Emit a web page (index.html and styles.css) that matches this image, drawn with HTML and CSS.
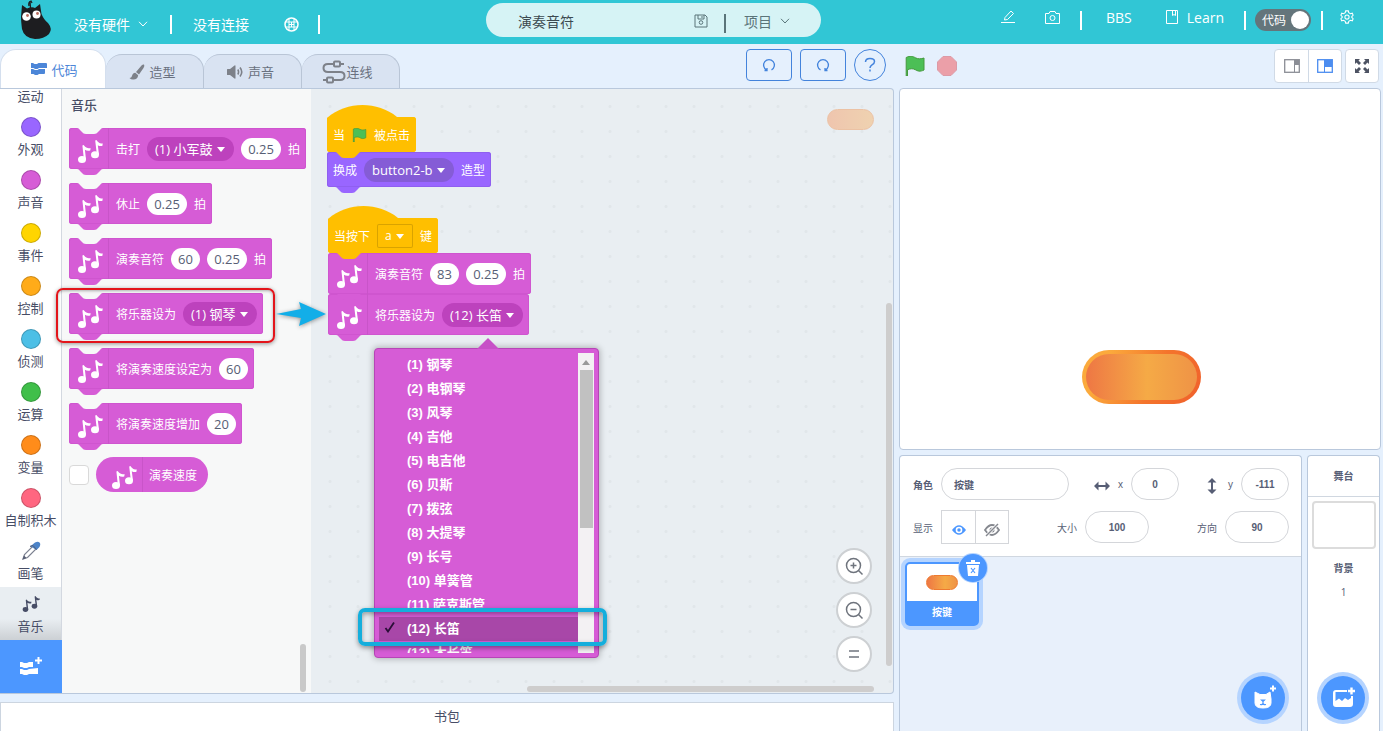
FILE: index.html
```html
<!DOCTYPE html>
<html lang="zh-CN">
<head>
<meta charset="utf-8">
<meta name="viewport" content="width=device-width, initial-scale=1">
<title>演奏音符</title>
<link rel="stylesheet" href="styles.css">
</head>
<body>
<svg class="defs" aria-hidden="true">
  <symbol id="notes" viewBox="0 0 26 25"><g fill="currentColor"><ellipse cx="5" cy="20.500" rx="4" ry="3.500"/><ellipse cx="18" cy="15.800" rx="4" ry="3.500"/><path d="M6.900 20.500L5.400 6.600L6.600 6C8.500 9 11 9.300 13.700 9.300L13.200 11.600C11 12 9.200 11.800 7.900 10.800L9 20.500Z"/><path d="M19.900 15.800L18.200 1.600L19.400 1C21.200 4 23.500 4.600 25.800 4.600L25.300 6.900C23.500 7.200 21.800 7 20.800 6.200L22 15.800Z"/></g></symbol>
  <symbol id="flag" viewBox="0 0 20 20"><path d="M1.200 1.500C5 -.5 8 .3 10.500 1.800S16 3 19 2V14C15 16 12.500 15 10.300 13.700S5.500 12.500 2.500 13.700V20H1.200Z" fill="#4cbf56" stroke="#45993d" stroke-width="1"/></symbol>
  <symbol id="chev" viewBox="0 0 10 6"><path d="M1 .8L5 5L9 .8" fill="none" stroke="currentColor"/></symbol>
  <symbol id="codeblocks" viewBox="0 0 16 12"><path fill="currentColor" d="M0 0H2L3.500 1H6L7.500 0H15Q16 0 16 1V5H8L6.500 6H4L2.500 5H0ZM0 6H2L4 7H6.500L8 6H14V10Q14 11 13 11H8L6.500 12H4L2.500 11H0Z"/></symbol>
</svg>

<header class="topbar">
  <div class="top-left">
    <svg class="logo" viewBox="0 0 34 40"><path d="M10 6Q9 2 12 1L13 3M11.500 8L11 1" stroke="#1d2024" stroke-width="1.300" fill="none"/><path fill="#1d1d20" d="M3 5L8 8.500Q13 6.500 16 8L21 4L22.500 14Q25 20 29 23Q34 29 30 34Q25 39 16 39Q5 38 3 29Q2 21 2 17Z"/><circle cx="7.500" cy="16.500" r="4.300" fill="#fff"/><circle cx="17.500" cy="14.500" r="4" fill="#fff"/><circle cx="8.500" cy="15.500" r="1.400" fill="#b86c5e"/><circle cx="18.500" cy="13.500" r="1.400" fill="#b86c5e"/></svg>
    <button class="plain">没有硬件 <svg class="chev"><use href="#chev"/></svg></button>
    <i class="bar"></i>
    <button class="plain">没有连接</button>
    <button class="plain globe" aria-label="语言"><svg width="15" height="15" viewBox="0 0 15 15" fill="none" stroke="currentColor"><circle cx="7.500" cy="7.500" r="6.500" stroke-width="1.500"/><path d="M5 2V13M10 2V13M2 5H13M2 10H13M7.500 5V10M5 7.500H10"/></svg></button>
    <i class="bar"></i>
  </div>
  <div class="project">
    <input class="project-name" aria-label="项目名称" value="演奏音符">
    <button class="plain" aria-label="保存"><svg width="14" height="14" viewBox="0 0 14 14" fill="none" stroke="currentColor"><path d="M1 1H11L13 3V13H1ZM4 1V5H10V1M8 2V4"/><circle cx="7" cy="8.500" r="1.800"/></svg></button>
    <i class="bar dark"></i>
    <button class="plain">项目 <svg class="chev"><use href="#chev"/></svg></button>
  </div>
  <div class="top-right">
    <button class="plain" aria-label="编辑"><svg width="14" height="14" viewBox="0 0 14 14" fill="none" stroke="currentColor"><path d="M0 12.500H14M4 7.500L10 1L12.500 3.500L6.500 9.500L3.500 10Z"/></svg></button>
    <button class="plain camera" aria-label="截图"><svg width="15" height="13" viewBox="0 0 15 13" fill="none" stroke="currentColor"><path d="M.5 2.500H4L5 .5H10L11 2.500H14.500V12.500H.5Z"/><circle cx="7.500" cy="7" r="2.500"/></svg></button>
    <i class="bar"></i>
    <a class="toplink bbs" href="#bbs">BBS</a>
    <a class="toplink" href="#learn"><svg width="12" height="14" viewBox="0 0 12 14" fill="none" stroke="currentColor"><path d="M.5.5H11.500V13.500H.5ZM6.500.5V5.500L8 4.500L9.500 5.500V.5"/></svg>Learn</a>
    <i class="bar"></i>
    <label class="switch"><input type="checkbox" checked><span>代码</span><b></b></label>
    <i class="bar"></i>
    <button class="plain gear" aria-label="设置"><svg width="14" height="14" viewBox="0 0 16 16" fill="none" stroke="currentColor" stroke-width="1.200"><path d="M6.500 1H9.500L10 3L12 4.200L14 3.600L15 6L13.500 7.500V8.500L15 10L14 12.400L12 11.800L10 13L9.500 15H6.500L6 13L4 11.800L2 12.400L1 10L2.500 8.500V7.500L1 6L2 3.600L4 4.200L6 3Z"/><circle cx="8" cy="8" r="2.400"/></svg></button>
  </div>
</header>

<main class="app">
  <section class="left">
    <div class="tools">
      <nav class="tabs">
        <button class="tab active"><svg width="16" height="12"><use href="#codeblocks"/></svg>代码</button>
        <button class="tab"><svg width="16" height="16" viewBox="0 0 16 16" fill="#7d8189"><path d="M15 .5Q16 1.500 14.500 4L10 10.500L7 8L12.500 1.500Q14 0 15 .5ZM6.300 8.700L9.200 11.200Q8.500 15.500 4.500 15.500Q2 15.700.5 14Q2.500 14 3 12Q3.500 9 6.300 8.700Z"/></svg>造型</button>
        <button class="tab"><svg width="17" height="14" viewBox="0 0 17 14"><path fill="#7d8189" d="M0 4.500Q0 4 .6 4H3L7.500.5Q8.500 0 8.500 1V13Q8.500 14 7.500 13.500L3 10H.6Q0 10 0 9.500Z"/><path d="M10.800 4.500Q12.300 7 10.800 9.500M13 2.500Q16.500 7 13 11.500" stroke="#7d8189" stroke-width="1.600" fill="none"/></svg>声音</button>
        <button class="tab wire"><svg width="24" height="24" viewBox="0 0 24 24" fill="none" stroke="#7d8189" stroke-width="2"><path d="M12 4H6Q1.500 4 1.500 8T6 12H18Q22.500 12 22.500 16T18 20H11M18 4H22M1 20H5"/><rect x="12" y="1.500" width="6" height="5" rx="1"/><rect x="5" y="17.500" width="6" height="5" rx="1"/></svg>连线</button>
      </nav>
      <div class="tool-buttons">
        <button class="tool" aria-label="撤销"><svg width="14" height="14" viewBox="0 0 14 14"><path d="M4.500 11.800A5.400 5.400 0 1 1 9.500 11.800M2.500 12.500H5V10" fill="none" stroke="currentColor" stroke-width="1.300"/></svg></button>
        <button class="tool" aria-label="重做"><svg width="14" height="14" viewBox="0 0 14 14"><path d="M4.500 11.800A5.400 5.400 0 1 1 9.500 11.800M11.500 12.500H9V10" fill="none" stroke="currentColor" stroke-width="1.300"/></svg></button>
        <button class="tool round" aria-label="帮助"><svg width="12" height="16" viewBox="0 0 12 16"><path d="M1.500 5Q1.500 1.500 6 1.500T10.500 4.500Q10.500 6.500 8 7.800Q6 9 6 11M6 12.500V14.500" fill="none" stroke="currentColor" stroke-width="1.500"/></svg></button>
      </div>
    </div>

    <div class="editor">
      <div class="cats">
        <div class="cat-list">
          <button class="cat"><i class="dot motion"></i>运动</button>
          <button class="cat"><i class="dot looks"></i>外观</button>
          <button class="cat"><i class="dot sound"></i>声音</button>
          <button class="cat"><i class="dot events"></i>事件</button>
          <button class="cat"><i class="dot control"></i>控制</button>
          <button class="cat"><i class="dot sensing"></i>侦测</button>
          <button class="cat"><i class="dot operators"></i>运算</button>
          <button class="cat"><i class="dot variables"></i>变量</button>
          <button class="cat"><i class="dot myblocks"></i>自制积木</button>
          <button class="cat"><svg width="20" height="20" viewBox="0 0 20 20"><path d="M2 18L3.500 13.500L12 5L15 8L6.500 16.500Z" fill="#fff" stroke="#7c8190" stroke-width="1.200"/><path d="M1.500 18.500L3 14.500L5.500 17Z" fill="#575e75"/><path d="M9 5L11 4L14 1.500Q17 0 18.500 1.500T18.500 6L15.500 9Z" fill="#4c83c8"/><path d="M9 5.500L12 4.500L15.500 8.500" stroke="#575e75" fill="none"/></svg>画笔</button>
          <button class="cat selected"><svg width="18" height="20"><use href="#notes"/></svg>音乐</button>
        </div>
        <button class="add-ext" aria-label="添加扩展"><svg width="24" height="20" viewBox="0 0 24 20"><path fill="#fff" d="M1 5H3L5 6H8L10 5H14V10H10L8 11H5L3 10H1ZM1 12H3L5 13H8L10 12L19 11V17H10L8 18H5L3 17H1Z"/><path d="M19.500 0V7M16 3.500H23" stroke="#fff" stroke-width="2"/></svg></button>
      </div>

      <div class="palette">
        <h2>音乐</h2>
        <div class="block music"><span class="ico"><svg><use href="#notes"/></svg></span>击打<span class="drop"><select aria-label="鼓"><option>(1) 小军鼓</option></select></span><input class="val wide" aria-label="拍数" value="0.25">拍</div>
        <div class="block music"><span class="ico"><svg><use href="#notes"/></svg></span>休止<input class="val wide" aria-label="拍数" value="0.25">拍</div>
        <div class="block music"><span class="ico"><svg><use href="#notes"/></svg></span>演奏音符<input class="val" aria-label="音符" value="60"><input class="val wide" aria-label="拍数" value="0.25">拍</div>
        <div class="block music"><span class="ico"><svg><use href="#notes"/></svg></span>将乐器设为<span class="drop"><select aria-label="乐器"><option>(1) 钢琴</option></select></span></div>
        <div class="block music"><span class="ico"><svg><use href="#notes"/></svg></span>将演奏速度设定为<input class="val" aria-label="速度" value="60"></div>
        <div class="block music"><span class="ico"><svg><use href="#notes"/></svg></span>将演奏速度增加<input class="val" aria-label="速度增量" value="20"></div>
        <div class="reporter-row"><input type="checkbox" id="tempo" class="check"><label for="tempo" class="reporter"><span class="ico"><svg><use href="#notes"/></svg></span>演奏速度</label></div>
        <i class="scroll-thumb"></i>
      </div>

      <div class="canvas">
        <div class="stack first">
          <div class="block hat">当<svg class="flag"><use href="#flag"/></svg>被点击</div>
          <div class="block looksblock">换成<span class="drop"><select aria-label="造型"><option>button2-b</option></select></span>造型</div>
        </div>
        <div class="stack second">
          <div class="block hat key">当按下<span class="drop square"><select aria-label="按键"><option>a</option></select></span>键</div>
          <div class="block music"><span class="ico"><svg><use href="#notes"/></svg></span>演奏音符<input class="val" aria-label="音符" value="83"><input class="val wide" aria-label="拍数" value="0.25">拍</div>
          <div class="block music"><span class="ico"><svg><use href="#notes"/></svg></span>将乐器设为<span class="drop"><select aria-label="乐器"><option>(12) 长笛</option></select></span></div>
        </div>
        <i class="ghost"></i>
        <div class="menu">
          <ul>
            <li>(1) 钢琴</li><li>(2) 电钢琴</li><li>(3) 风琴</li><li>(4) 吉他</li><li>(5) 电吉他</li><li>(6) 贝斯</li><li>(7) 拨弦</li><li>(8) 大提琴</li><li>(9) 长号</li><li>(10) 单簧管</li><li>(11) 萨克斯管</li><li class="chosen"><svg width="12" height="12" viewBox="0 0 12 12"><path d="M1.500 7L4 10.500L10 1.500" fill="none" stroke="#2b0e38" stroke-width="1.800"/></svg>(12) 长笛</li><li>(13) 木长笛</li>
          </ul>
          <div class="menu-scroll"><svg width="8" height="5" viewBox="0 0 8 5"><path d="M0 5L4 0L8 5Z" fill="#999"/></svg><i></i></div>
        </div>
        <div class="zooms">
          <button aria-label="放大"><svg viewBox="0 0 20 20"><circle cx="9.500" cy="9.500" r="7"/><path d="M14.500 14.500L18.500 18.500M6.500 9.500H12.500M9.500 6.500V12.500"/></svg></button>
          <button aria-label="缩小"><svg viewBox="0 0 20 20"><circle cx="9.500" cy="9.500" r="7"/><path d="M14.500 14.500L18.500 18.500M6.500 9.500H12.500"/></svg></button>
          <button aria-label="还原"><svg viewBox="0 0 20 20"><path d="M5 7H15M5 13H15"/></svg></button>
        </div>
        <i class="vscroll"></i><i class="hscroll"></i>
      </div>

      <i class="mark-red"></i>
      <svg class="mark-arrow" viewBox="0 0 52 28"><path d="M1 14L26 9L24 2L51 14L24 26L26 18Z" fill="#12aee8"/></svg>
      <i class="mark-blue"></i>
    </div>

    <button class="backpack">书包</button>
  </section>

  <section class="right">
    <div class="stage-bar">
      <button class="plain" aria-label="开始"><svg width="20" height="20"><use href="#flag"/></svg></button>
      <button class="plain" aria-label="停止"><svg width="20" height="20" viewBox="0 0 20 20"><path d="M6 .5H14L19.500 6V14L14 19.500H6L.5 14V6Z" fill="#eb9fa8" stroke="#dc9aa6"/></svg></button>
      <div class="sizes">
        <button aria-label="小舞台"><svg width="16" height="14" viewBox="0 0 16 14"><rect x=".7" y=".7" width="14.600" height="12.600" fill="none" stroke="#8b8e96" stroke-width="1.300"/><path d="M10.500 1V13" stroke="#8b8e96"/><path d="M11 1H15V6H11Z" fill="#8b8e96"/></svg></button>
        <button aria-label="大舞台"><svg width="16" height="14" viewBox="0 0 16 14"><rect x=".7" y=".7" width="14.600" height="12.600" fill="none" stroke="#4c8df0" stroke-width="1.300"/><path d="M7.500 1V13" stroke="#4c8df0"/><path d="M8 1H15V8H8Z" fill="#4c8df0"/></svg></button>
      </div>
      <div class="sizes full"><button aria-label="全屏"><svg width="16" height="16" viewBox="0 0 16 16"><path d="M1 1H6L4.500 2.500L7 5L5 7L2.500 4.500L1 6ZM15 1V6L13.500 4.500L11 7L9 5L11.500 2.500L10 1ZM1 15V10L2.500 11.500L5 9L7 11L4.500 13.500L6 15ZM15 15H10L11.500 13.500L9 11L11 9L13.500 11.500L15 10Z" fill="#4d5363"/></svg></button></div>
    </div>
    <div class="stage"><i class="sprite"></i></div>
    <div class="panes">
      <div class="sprites">
        <div class="info">
          <div class="row">
            <div class="field"><label class="strong" for="sname">角色</label><input id="sname" class="pill name" value="按键"></div>
            <div class="field arrows"><svg width="16" height="16" viewBox="0 0 16 16"><path d="M0 8L4.500 3.500V7H11.500V3.500L16 8L11.500 12.500V9H4.500V12.500Z" fill="#575e75"/></svg><label for="sx">x</label><input id="sx" class="pill small" value="0"></div>
            <div class="field arrows"><svg width="16" height="16" viewBox="0 0 16 16"><path d="M8 0L12.500 4.500H9V11.500H12.500L8 16L3.500 11.500H7V4.500H3.500Z" fill="#575e75"/></svg><label for="sy">y</label><input id="sy" class="pill small" value="-111"></div>
          </div>
          <div class="row">
            <div class="field"><span>显示</span><div class="eyes"><button aria-label="显示"><svg width="14" height="12" viewBox="0 0 16 12"><path d="M0 6Q8 -5 16 6Q8 17 0 6Z" fill="#4c97ff"/><circle cx="8" cy="6" r="3.800" fill="#fff"/><circle cx="8" cy="6" r="2" fill="#4c97ff"/></svg></button><button aria-label="隐藏"><svg width="16" height="14" viewBox="0 0 16 14"><path d="M1 7Q8 -3 15 7Q8 17 1 7Z" fill="none" stroke="#85888f" stroke-width="1.800"/><circle cx="8" cy="7" r="2.500" fill="#85888f"/><path d="M2 13L14 1" stroke="#fff" stroke-width="3"/><path d="M2 13L14 1" stroke="#85888f" stroke-width="1.400"/></svg></button></div></div>
            <div class="field"><label for="ssize">大小</label><input id="ssize" class="pill" value="100"></div>
            <div class="field"><label for="sdir">方向</label><input id="sdir" class="pill" value="90"></div>
          </div>
        </div>
        <div class="sprite-list">
          <div class="tile"><div class="thumb"><i></i></div><span>按键</span>
            <button class="trash" aria-label="删除"><svg width="14" height="16" viewBox="0 0 14 16"><path d="M5 0H9V2H14V4H0V2H5ZM1 5H13L12 16H2Z" fill="#fff"/><path d="M5 8L9 13M9 8L5 13" stroke="#4c97ff" stroke-width="1.200"/></svg></button>
          </div>
          <button class="fab" aria-label="选择角色"><svg width="26" height="26" viewBox="0 0 26 26"><path d="M5 7L10 9.500H16L20 7L21 14V18Q21 23 13 23T5 18Z" fill="#fff" stroke="#fff" stroke-linejoin="round"/><path d="M11.500 15H14.500L13 16.500ZM13 16.500V18.500M10 19.500Q13 20 13 18Q13 20 16 19.500" fill="#4c97ff" stroke="#4c97ff" stroke-width="1.200"/><path d="M23 .5V6.500M20 3.500H26" stroke="#fff" stroke-width="2"/></svg></button>
        </div>
      </div>
      <div class="backdrops">
        <h3>舞台</h3>
        <i class="bd-thumb"></i>
        <b>背景</b>
        <span>1</span>
        <button class="fab" aria-label="选择背景"><svg width="26" height="26" viewBox="0 0 26 26"><path fill="#fff" fill-rule="evenodd" d="M6 5H17V7H5.500V16L9 13.500L12 16L15 13L18 15L21 13V11H23V19Q23 22 20 22H6Q3 22 3 19V8Q3 5 6 5Z"/><path d="M21.500 2.500V9.500M18 6H25" stroke="#fff" stroke-width="2.400"/></svg></button>
      </div>
    </div>
  </section>
</main>
</body>
</html>
```
FILE: styles.css
```css
* { box-sizing: border-box; }
html, body { height: 100%; margin: 0; }
body {
  display: flex; flex-direction: column; overflow: hidden;
  font-family: "Open Sans", "Noto Sans CJK SC", sans-serif;
  font-size: 13px; color: #575e75; background: #e5f0fd;
}
button, input, select { font: inherit; color: inherit; }
button { background: none; border: 0; padding: 0; cursor: pointer; }
svg { display: block; flex: none; }
.defs { position: absolute; width: 0; height: 0; }
.plain { display: flex; align-items: center; gap: 8px; }

/* Top bar */
.topbar {
  display: grid; grid-template-columns: 486fr 335px 562fr; align-items: center;
  height: 44px; flex: none; background: #31c6d5; color: #fff; font-size: 14px;
}
.top-left { display: flex; align-items: center; height: 44px; padding: 4px 0 0 19px; }
.logo { width: 34px; height: 40px; margin-top: -8px; margin-right: 21px; }
.chev { width: 10px; height: 6px; }
.bar { width: 2px; height: 19px; background: currentColor; }
.top-left .bar { margin-left: 22px; }
.top-left .bar + .plain { margin-left: 21px; }
.globe { margin-left: 35px; }
.top-left .globe + .bar { margin-left: 19px; }
.project {
  display: flex; align-items: center; height: 34px; margin-bottom: 4px;
  padding: 2px 31px 0 32px; border-radius: 17px; background: #d6f3f5; color: #5a7479;
}
.project-name { flex: 1; min-width: 0; border: 0; padding: 0; background: none; outline: 0; color: #3c4a50; }
.bar.dark { margin: 4px 18px 0 16px; }
.top-right { display: flex; align-items: center; justify-content: flex-end; height: 44px; padding: 0 29px 10px 0; }
.top-right .bar { margin-top: 6px; }
.camera { margin: 0 20px 0 30px; }
.toplink { display: flex; align-items: center; gap: 9px; color: #fff; text-decoration: none; }
.bbs { margin: 0 34px 0 24px; }
.toplink + .bar { margin-left: 20px; margin-right: 9px; }
.switch {
  display: flex; align-items: center; justify-content: space-between; position: relative;
  width: 56px; height: 22px; margin-top: 6px; padding: 0 2px 0 7px; border-radius: 11px;
  background: #64757b; font-size: 12px;
}
.switch input { position: absolute; opacity: 0; }
.switch b { width: 18px; height: 18px; border-radius: 9px; background: #fff; }
.switch + .bar { margin-left: 10px; }
.gear { margin-left: 17px; }

/* Columns */
.app { display: flex; flex: 1; min-height: 0; }
.left { display: flex; flex-direction: column; flex: 1; min-width: 0; }
.right { display: flex; flex-direction: column; width: 484px; margin-left: 5px; padding-right: 2px; }

/* Tabs and tools */
.tools { display: flex; justify-content: space-between; height: 44px; }
.tabs { display: flex; align-items: flex-end; }
.tab {
  display: flex; align-items: center; justify-content: center; gap: 4px;
  width: 98px; height: 34px; padding-right: 4px; color: #6a7180; background: #d9e3f2;
  border: 1px solid #b9c5d6; border-bottom: 0; border-left: 0; border-radius: 16px 16px 0 0;
}
.tab.active { width: 106px; height: 39px; padding: 0 0 0 3px; background: #fff; color: #4c86d8; border: 1px solid #d4dfee; border-bottom: 0; }
.tab.wire { gap: 0; padding-right: 6px; }
.tool-buttons { display: flex; gap: 8px; padding: 5px 8px 0 0; }
.tool {
  display: flex; align-items: center; justify-content: center; width: 46px; height: 32px;
  border: 1px solid #4383dc; border-radius: 4px; color: #4383dc;
}
.tool.round { width: 32px; border-radius: 16px; }

/* Editor */
.editor {
  position: relative; display: flex; flex: 1; min-height: 0;
  border: 1px solid #b9c8dc; border-left: 0; border-radius: 0 4px 4px 0; background: #e9eef2;
}
.cats { display: flex; flex-direction: column; width: 62px; background: #fff; border-right: 1px solid #d3d8e0; }
.cat-list { display: flex; flex-direction: column; justify-content: flex-end; flex: 1; min-height: 0; overflow: hidden; }
.cat {
  display: flex; flex-direction: column; align-items: center; gap: 4px; flex: none;
  height: 53px; padding-top: 7px; line-height: 16px; white-space: nowrap; color: #474d66;
}
.cat.selected { background: linear-gradient(#e9eef2 60%, #ccd0d4); color: #474d66; }
.dot { width: 20px; height: 20px; border-radius: 10px; border: 1px solid rgba(0, 0, 0, .2); }
.motion { background: #4c97ff; }
.looks { background: #9966ff; }
.sound { background: #d65cd6; }
.events { background: #ffd500; }
.control { background: #ffab19; }
.sensing { background: #4cbfe6; }
.operators { background: #40bf4a; }
.variables { background: #ff8c1a; }
.myblocks { background: #ff6680; }
.add-ext { display: flex; align-items: center; justify-content: center; width: 62px; height: 53px; background: #4c97ff; }

.palette {
  --back: #f7f8f8;
  position: relative; display: flex; flex-direction: column; align-items: flex-start; gap: 14px;
  width: 249px; padding: 8px 0 0 7px; background: #f7f8f8;
}
.palette h2 { margin: 0 0 1px 2px; font-size: 13px; line-height: 16px; font-weight: 500; color: #474d66; }
.scroll-thumb { position: absolute; right: 5px; bottom: 1px; width: 6px; height: 48px; border-radius: 3px; background: #c9c9c9; }

/* Blocks */
.block {
  position: relative; display: flex; align-items: center; gap: 7px; height: 41px; padding: 0 6px;
  border-radius: 3px; color: #fff; font-size: 12px; white-space: nowrap;
  background: var(--fill); box-shadow: inset 0 0 0 1px var(--edge);
}
.block::before, .block::after {
  content: ""; position: absolute; left: 8px; width: 26px; height: 6px;
  clip-path: path("M0 0C2 0 2 1 3 2L5 4C6 5 7 6 9 6H17C19 6 20 5 21 4L23 2C24 1 24 0 26 0Z");
}
.block::before { top: 0; background: var(--back); }
.block::after { top: 100%; background: var(--fill); z-index: 1; }
.stack .block + .block::before { display: none; }
.music { --fill: #d65cd6; --edge: #cf55cf; }
.looksblock { --fill: #9966ff; --edge: #8f5ff0; height: 35px; padding: 0 6px; }
.hat { --fill: #ffbf00; --edge: #ffbf00; height: 35px; padding: 0 6px; }
.hat::before {
  left: 0; top: -12px; width: 70px; height: 15px; background: #ffbf00;
  clip-path: path("M0 15V13C20 -4 50 -4 70 12V15Z");
}
.ico {
  display: flex; align-items: center; align-self: stretch; width: 34px; padding-top: 6px;
  border-right: 1px solid #c954c9;
}
.ico svg { width: 26px; height: 25px; margin-left: 2px; }
.val {
  width: 29px; height: 22px; padding: 0; border: 0; border-radius: 11px;
  text-align: center; font-size: 13px; color: #575e75; background: #fff;
}
.val.wide { width: 40px; }
.drop { position: relative; display: flex; border-radius: 12px; background: #bd42bd; }
.drop select {
  appearance: none; height: 24px; padding: 0 21px 0 8px; border: 0; border-radius: 12px;
  background: none; font-size: 13px; color: #fff; outline: 0;
}
.drop::after {
  content: ""; position: absolute; right: 9px; top: 10px;
  border: 4px solid transparent; border-top: 5px solid #fff; border-bottom: 0; pointer-events: none;
}
.looksblock .drop { background: #855cd6; }
.drop.square { border-radius: 2px; background: none; box-shadow: inset 0 0 0 1px #d9a300; }
.drop.square select { font-size: 12px; }
.flag { width: 15px; height: 14px; }
.reporter-row { display: flex; align-items: center; gap: 7px; margin-top: -1px; }
.check { appearance: none; width: 20px; height: 20px; margin: 0; border: 1px solid #d9d9d9; border-radius: 4px; background: #fff; }
.reporter {
  display: flex; align-items: center; gap: 6px; height: 35px; padding: 0 11px 0 13px;
  border-radius: 18px; background: #d65cd6; color: #fff; font-size: 12px;
}

/* Script canvas */
.canvas {
  --back: #e9eef2;
  position: relative; flex: 1; min-width: 0;
  background: radial-gradient(circle, #e1e6ea 1px, transparent 2px) 5px 5px / 28px 25px;
}
.stack { position: absolute; display: flex; flex-direction: column; align-items: flex-start; }
.first { left: 16px; top: 28px; }
.second { left: 17px; top: 129px; }
.ghost {
  position: absolute; right: 19px; top: 20px; width: 47px; height: 21px; border-radius: 11px;
  border: 1px solid #ecc2a4; background: linear-gradient(90deg, #efc5ae, #efd2b0);
}
.menu {
  position: absolute; left: 63px; top: 259px; display: flex; width: 225px; height: 310px; padding: 4px;
  border: 1px solid #b745b7; border-radius: 4px; background: #d65cd6; color: #fff;
  box-shadow: 0 0 6px 1px rgba(0, 0, 0, .25);
}
.menu::before {
  content: ""; position: absolute; left: 102px; top: -11px; width: 22px; height: 11px;
  background: #c750c7; clip-path: polygon(50% 0, 100% 100%, 0 100%);
}
.menu ul {
  flex: 1; height: 300px; margin: 0; padding: 0; list-style: none; overflow: hidden;
  font-family: "Liberation Sans", "Noto Sans CJK SC", sans-serif; font-weight: 700;
}
.menu li { display: flex; align-items: center; height: 24px; padding: 0 0 4px 28px; white-space: pre; }
.menu .chosen { background: #a847a8; padding-left: 5px; gap: 11px; }
.menu-scroll { display: flex; flex-direction: column; align-items: center; gap: 5px; width: 16px; padding-top: 7px; background: #f3f1f3; }
.menu-scroll i { width: 13px; height: 158px; background: #c1c1c1; }
.zooms { position: absolute; right: 21px; bottom: 21px; display: flex; flex-direction: column; gap: 8px; }
.zooms button {
  display: flex; align-items: center; justify-content: center; width: 36px; height: 36px;
  border-radius: 18px; border: 2px solid #cdd0d3; background: #fff;
}
.zooms svg { width: 20px; height: 20px; fill: none; stroke: #6f747d; stroke-width: 1.5; }
.vscroll { position: absolute; right: 1px; bottom: 27px; width: 6px; height: 363px; border-radius: 3px; background: #cecdcd; }
.hscroll { position: absolute; right: 19px; bottom: 1px; width: 347px; height: 6px; border-radius: 3px; background: #cecdcd; }

/* Annotations over the editor */
.mark-red { position: absolute; left: 56px; top: 199px; width: 219px; height: 55px; border: 2px solid #e3151b; border-radius: 7px; box-shadow: 0 1px 4px rgba(0, 0, 0, .4), inset 0 1px 3px rgba(0, 0, 0, .3); }
.mark-arrow { position: absolute; left: 275px; top: 211px; width: 52px; height: 28px; filter: drop-shadow(0 1px 2px rgba(0, 0, 0, .4)); }
.mark-blue { position: absolute; left: 358px; top: 519px; width: 249px; height: 38px; border: 4px solid #14aedc; border-radius: 7px; box-shadow: 0 2px 5px rgba(0, 0, 0, .4), inset 0 2px 5px rgba(0, 0, 0, .35); }

.backpack { height: 29px; margin-top: 8px; padding-bottom: 4px; flex: none; border: 1px solid #ccd5e0; border-bottom: 0; background: #fff; color: #474d66; }

/* Stage */
.stage-bar { display: flex; align-items: center; gap: 12px; height: 44px; padding: 0 2px 0 6px; }
.sizes { display: flex; height: 34px; border: 1px solid #d0dae6; border-radius: 4px; background: #fff; }
.sizes:not(.full) { margin-left: auto; }
.sizes.full { margin-left: -9px; }
.sizes button { display: flex; align-items: center; justify-content: center; width: 33px; }
.sizes button + button { border-left: 1px solid #d0dae6; }
.sizes.full button { width: 32px; }
.stage { position: relative; height: 362px; border: 1px solid #b9c8dc; border-radius: 4px; background: #fff; }
.sprite {
  position: absolute; left: 182px; top: 261px; width: 119px; height: 54px; border-radius: 27px;
  border: 4px solid transparent;
  background: linear-gradient(90deg, #ee7744, #f5aa46 55%, #ef9346) padding-box, linear-gradient(115deg, #fbaa3c 20%, #f4742c 60%, #f0602c) border-box;
}
.panes { display: flex; gap: 5px; flex: 1; min-height: 0; margin-top: 5px; padding-right: 1px; }
.sprites { display: flex; flex-direction: column; flex: 1; border: 1px solid #b9c8dc; border-bottom: 0; border-radius: 4px 4px 0 0; background: #e8f0fb; }
.info {
  display: flex; flex-direction: column; gap: 10px; padding: 12px 12px 12px 13px; background: #fff;
  border-bottom: 1px solid #d0d7e0; border-radius: 4px 4px 0 0; font-size: 10px;
  font-family: "Liberation Sans", "Noto Sans CJK SC", sans-serif;
}
.row { display: flex; justify-content: space-between; }
.field { display: flex; align-items: center; gap: 8px; }
.strong { font-weight: 700; }
.arrows svg { margin-top: 3px; }
.pill {
  width: 64px; height: 32px; padding: 0; border: 1px solid #d4d6da; border-radius: 16px;
  background: #fff; text-align: center; font-weight: 700; color: #575e75;
}
.name { width: 128px; padding-left: 12px; text-align: left; }
.small { width: 48px; }
.eyes { display: flex; border: 1px solid #d4d6da; }
.eyes button { display: flex; align-items: center; justify-content: center; width: 33px; height: 32px; padding-top: 5px; }
.eyes button + button { border-left: 1px solid #d4d6da; }
.sprite-list { position: relative; flex: 1; padding: 5px; }
.tile {
  position: relative; display: flex; flex-direction: column; width: 74px; height: 64px;
  border: 2px solid #4c97ff; border-radius: 5px; background: #4c97ff; box-shadow: 0 0 0 4px #b5d4ff;
  color: #fff; font-size: 10px; font-weight: 700; text-align: center; line-height: 23px;
}
.thumb { display: flex; align-items: center; justify-content: center; height: 37px; border-radius: 3px 3px 0 0; background: #fff; }
.thumb i { width: 32px; height: 15px; border-radius: 8px; border: 1px solid #ee7a30; background: linear-gradient(90deg, #ee7744, #f5aa46 60%, #ef9346); }
.trash {
  position: absolute; right: -10px; top: -10px; display: flex; align-items: center; justify-content: center;
  width: 28px; height: 28px; border-radius: 14px; background: #4c97ff; box-shadow: 0 0 0 1px #b5d4ff;
}
.fab {
  position: absolute; right: 16px; bottom: 11px; display: flex; align-items: center; justify-content: center;
  width: 44px; height: 44px; border-radius: 22px; background: #4c97ff; box-shadow: 0 0 0 4px #b5d4ff;
}
.backdrops {
  position: relative; display: flex; flex-direction: column; align-items: center; width: 73px;
  border: 1px solid #b9c8dc; border-bottom: 0; border-radius: 4px 4px 0 0; background: #fff; font-size: 10px;
}
.backdrops h3 { align-self: stretch; margin: 0 0 4px; border-bottom: 1px solid #d0d7e0; font-size: 10px; line-height: 40px; text-align: center; }
.bd-thumb { width: 64px; height: 48px; border: 2px solid #dcdcdc; border-radius: 4px; }
.backdrops b { margin-top: 11px; line-height: 16px; }
.backdrops span { margin-top: 8px; line-height: 16px; }
.backdrops .fab { right: 14px; }
```
